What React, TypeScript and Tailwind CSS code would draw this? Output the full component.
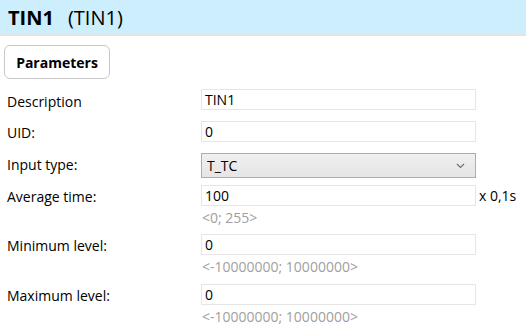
const font = { fontFamily: '"Open Sans", "Noto Sans", sans-serif' };

function Hint({ children }: { children: React.ReactNode }) {
  return <div className="h-[22px] pl-[1px] text-[14px] leading-[23px] text-[#a0a0a0]">{children}</div>;
}

function TextBox({ value }: { value: string }) {
  return (
    <div className="flex h-[21px] w-[275px] items-center border border-[#e6e6e6] bg-white px-[3px] text-[14px] text-black">
      {value}
    </div>
  );
}

export default function App() {
  return (
    <div className="h-[330px] w-[526px] overflow-hidden bg-white text-black" style={font}>
      <div className="flex h-[36px] items-baseline gap-[14px] border-b-2 border-[#e3e3e3] bg-[#cdeefd] pl-[8px] pt-[3px]">
        <span className="text-[20px] font-bold">TIN1</span>
        <span className="text-[20px]">(TIN1)</span>
      </div>

      <div className="pl-[4px] pt-[9px]">
        <button className="h-[34px] w-[106px] rounded-[6px] border border-[#c8c8c8] bg-white text-[14px] font-bold">
          Parameters
        </button>
      </div>

      <div className="grid grid-cols-[201px_1fr] pt-[10px] text-[14px]">
        <div className="pl-[7px] pt-[2px]">Description</div>
        <div className="pb-[11px]">
          <TextBox value="TIN1" />
        </div>

        <div className="pl-[7px] pt-[1px]">UID:</div>
        <div className="pb-[11px]">
          <TextBox value="0" />
        </div>

        <div className="pl-[7px] pt-[1px]">Input type:</div>
        <div className="pb-[7px]">
          <div className="flex h-[25px] w-[275px] items-center justify-between border border-[#adadad] bg-gradient-to-b from-[#f0f0f0] to-[#e5e5e5] pl-[5px] pr-[10px]">
            <span>T_TC</span>
            <svg width="9" height="6" viewBox="0 0 9 6" fill="none" stroke="#707070" strokeWidth="1.2">
              <path d="M1 1l3.5 3.5L8 1" />
            </svg>
          </div>
        </div>

        <div className="pl-[7px] pt-[1px]">Average time:</div>
        <div className="pb-[6px]">
          <div className="flex items-center gap-[3px]">
            <TextBox value="100" />
            <span>x 0,1s</span>
          </div>
          <Hint>&lt;0; 255&gt;</Hint>
        </div>

        <div className="pl-[7px] pt-[1px]">Minimum level:</div>
        <div className="pb-[7px]">
          <TextBox value="0" />
          <Hint>&lt;-10000000; 10000000&gt;</Hint>
        </div>

        <div className="pl-[7px] pt-[1px]">Maximum level:</div>
        <div>
          <TextBox value="0" />
          <Hint>&lt;-10000000; 10000000&gt;</Hint>
        </div>
      </div>
    </div>
  );
}
